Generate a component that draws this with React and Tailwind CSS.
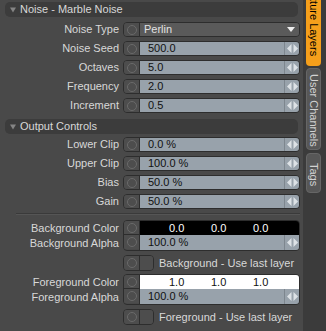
import React from "react";

const Circle = () => (
  <div className="w-[15px] h-full flex items-center justify-center bg-[#4d4d4d]">
    <div className="w-[10px] h-[10px] rounded-full border border-[#6a6a6a]" />
  </div>
);

const Arrows = () => (
  <div className="w-[15px] h-full flex items-center justify-center border-l border-[#7d868e] bg-[#98a2ab]">
    <svg width="11" height="9" viewBox="0 0 11 9">
      <path d="M0 4.5L4.5 0V9Z" fill="#dde2e6" />
      <path d="M11 4.5L6.5 0V9Z" fill="#dde2e6" />
    </svg>
  </div>
);

function Header({ title, className = "" }) {
  return (
    <div className={`mx-[5px] h-[15px] rounded-[5px] bg-[#3c3c3c] flex items-center pl-[5px] text-[#d8d8d8] ${className}`}>
      <svg width="6" height="6" viewBox="0 0 6 6">
        <path d="M0 0.5H6L3 5.5Z" fill="#858585" />
      </svg>
      <span className="ml-[4px] leading-[15px]">{title}</span>
    </div>
  );
}

function ValueRow({ label, value }) {
  return (
    <div className="flex h-[15px]">
      <div className="w-[119px] text-right leading-[15px] text-[#d8d8d8]">{label}</div>
      <div className="ml-[4px] w-[177px] h-full flex rounded-[4px] border border-[#2d2d2d] overflow-hidden">
        <div className="border-r border-[#2d2d2d]">
          <Circle />
        </div>
        <div className="flex-1 bg-[#98a2ab] pl-[8px] leading-[13px] text-[#111]">{value}</div>
        <Arrows />
      </div>
    </div>
  );
}

function DropRow({ label, value }) {
  return (
    <div className="flex h-[15px]">
      <div className="w-[119px] text-right leading-[15px] text-[#d8d8d8]">{label}</div>
      <div className="ml-[4px] w-[177px] h-full flex rounded-[4px] border border-[#2d2d2d] overflow-hidden">
        <div className="border-r border-[#2d2d2d]">
          <Circle />
        </div>
        <div className="flex-1 bg-[#5a5a5a] pl-[4px] pr-[4px] leading-[13px] text-[#e2e2e2] flex items-center justify-between">
          <span>{value}</span>
          <svg width="8" height="5" viewBox="0 0 8 5">
            <path d="M0 0H8L4 5Z" fill="#eeeeee" />
          </svg>
        </div>
      </div>
    </div>
  );
}

function ColorBlock({ name, values, bg, fg }) {
  return (
    <div className="flex">
      <div className="w-[119px] flex flex-col text-right text-[#d8d8d8] pt-[1px]">
        <div className="h-[15px] leading-[15px]">{name} Color</div>
        <div className="h-[15px] leading-[15px]">{name} Alpha</div>
      </div>
      <div className="ml-[4px] w-[177px] flex rounded-[4px] border border-[#2d2d2d] overflow-hidden">
        <div className="flex flex-col border-r border-[#2d2d2d]">
          <div className="h-[14px] border-b border-[#2d2d2d]">
            <Circle />
          </div>
          <div className="h-[14px]">
            <Circle />
          </div>
        </div>
        <div className="flex-1 flex flex-col">
          <div className={`h-[14px] flex pl-[29px] leading-[14px] ${bg} ${fg}`}>
            {values.map((v, i) => (
              <span key={i} className="w-[42px]">{v}</span>
            ))}
          </div>
          <div className="h-[15px] flex">
            <div className="flex-1 bg-[#98a2ab] pl-[8px] leading-[14px] text-[#111]">100.0 %</div>
            <Arrows />
          </div>
        </div>
      </div>
    </div>
  );
}

function Toggle({ label, className = "" }) {
  return (
    <div className={`flex items-center h-[16px] ${className}`}>
      <div className="ml-[123px] w-[31px] h-full flex rounded-[4px] border border-[#2d2d2d] overflow-hidden">
        <div className="border-r border-[#2d2d2d]">
          <Circle />
        </div>
        <div className="flex-1 bg-[#4d4d4d]" />
      </div>
      <span className="ml-[5px] text-[#d8d8d8]">{label}</span>
    </div>
  );
}

export default function App() {
  return (
    <div className="w-[326px] h-[331px] flex overflow-hidden bg-[#494949] font-['Liberation_Sans',Arial,sans-serif] text-[11px]">
      {/* MAIN PANEL */}
      <div className="w-[303px] pt-[2px] flex flex-col">
        <Header title="Noise - Marble Noise" />
        <div className="mt-[5px] flex flex-col gap-[4px]">
          <DropRow label="Noise Type" value="Perlin" />
          <ValueRow label="Noise Seed" value="500.0" />
          <ValueRow label="Octaves" value="5.0" />
          <ValueRow label="Frequency" value="2.0" />
          <ValueRow label="Increment" value="0.5" />
        </div>

        <Header title="Output Controls" className="mt-[6px]" />
        <div className="mt-[3px] flex flex-col gap-[4px]">
          <ValueRow label="Lower Clip" value="0.0 %" />
          <ValueRow label="Upper Clip" value="100.0 %" />
          <ValueRow label="Bias" value="50.0 %" />
          <ValueRow label="Gain" value="50.0 %" />
        </div>

        {/* SEPARATOR */}
        <div className="mt-[4px] ml-[16px] mr-[3px] h-[2px] border-t border-[#3a3a3a] border-b border-b-[#555555]" />

        <div className="mt-[5px]">
          <ColorBlock name="Background" values={["0.0", "0.0", "0.0"]} bg="bg-black" fg="text-white" />
        </div>
        <Toggle label="Background - Use last layer" className="mt-[4px]" />
        <div className="mt-[3px]">
          <ColorBlock name="Foreground" values={["1.0", "1.0", "1.0"]} bg="bg-white" fg="text-[#111]" />
        </div>
        <Toggle label="Foreground - Use last layer" className="mt-[4px]" />
      </div>

      {/* SIDE TABS */}
      <div className="w-[23px] bg-[#3b3b3b] flex flex-col">
        <div className="mt-[-28px] ml-[3px] w-[15px] h-[94px] rounded-[4px] bg-[#f59f1b] pt-[3px] flex justify-center text-black [writing-mode:vertical-rl] leading-[15px]">
          Texture Layers
        </div>
        <div className="mt-[2px] ml-[3px] w-[15px] h-[82px] rounded-[4px] bg-[#575757] border border-[#666] pt-[3px] flex justify-center text-[#d2d2d2] [writing-mode:vertical-rl] leading-[13px]">
          User Channels
        </div>
        <div className="mt-[3px] ml-[3px] w-[15px] h-[40px] rounded-[4px] bg-[#575757] border border-[#666] pt-[4px] flex justify-center text-[#d2d2d2] [writing-mode:vertical-rl] leading-[13px]">
          Tags
        </div>
      </div>
    </div>
  );
}
